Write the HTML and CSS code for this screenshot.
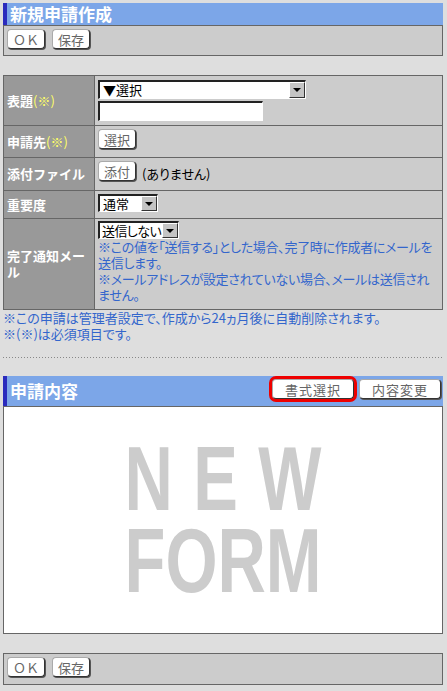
FILE: index.html
```html
<!DOCTYPE html>
<html>
<head>
    <link rel="stylesheet" href="styles.css">
</head>
<body>
    <div class="head"><span class="headTitle">新規申請作成</span></div>
    <div class="toolbar">
        <button class="btn">ＯＫ</button>
        <button class="btn">保存</button>
    </div>

    <table class="form">
        <tr class="r1">
            <th>表題<span class="req">(※)</span></th>
            <td>
                <div class="sel selTitle"><span class="selText">▼選択</span><span class="selBtn"></span></div>
                <div class="txt"></div>
            </td>
        </tr>
        <tr class="r2">
            <th>申請先<span class="req">(※)</span></th>
            <td><button class="btn">選択</button></td>
        </tr>
        <tr class="r3">
            <th>添付ファイル</th>
            <td>
                <div class="cellRow">
                    <button class="btn">添付</button>
                    <span class="none">(ありません)</span>
                </div>
            </td>
        </tr>
        <tr class="r4">
            <th>重要度</th>
            <td><div class="sel selPrio"><span class="selText">通常</span><span class="selBtn"></span></div></td>
        </tr>
        <tr class="r5">
            <th>完了通知メール</th>
            <td>
                <div class="sel selMail"><span class="selText">送信しない</span><span class="selBtn"></span></div>
                <div class="help">※この値を「送信する」とした場合、完了時に作成者にメールを<br>送信します。<br>※メールアドレスが設定されていない場合、メールは送信され<br>ません。</div>
            </td>
        </tr>
    </table>
    <div class="notes">
        ※この申請は管理者設定で、作成から24ヵ月後に自動削除されます。<br>
        ※(※)は必須項目です。
    </div>

    <div class="dots"></div>

    <div class="head headSection">
        <span class="headTitle">申請内容</span>
        <div class="headBtns">
            <button class="btn btnWide btnMark">書式選択</button>
            <button class="btn btnWide">内容変更</button>
        </div>
    </div>
    <div class="content">
        <div class="newForm">
            <div class="nfLine"><span>N</span><span>E</span><span>W</span></div>
            <div class="nfLine"><span>F</span><span>O</span><span>R</span><span>M</span></div>
        </div>
    </div>

    <div class="toolbar toolbarBottom">
        <button class="btn">ＯＫ</button>
        <button class="btn">保存</button>
    </div>
</body>
</html>
```
FILE: styles.css
```css
body {
    margin: 3px 4px 0 3px;
    background: #dedede;
    font-family: "Noto Sans CJK JP", "Noto Sans CJK SC", sans-serif;
    font-size: 13px;
    line-height: 16px;
    font-feature-settings: "palt";
}

/* blue title bars */
.head {
    display: flex;
    align-items: center;
    height: 22px;
    padding-left: 3px;
    background: #7ca6e8;
    border-left: 4px solid #2b2bbd;
    color: #fff;
}
.headTitle {
    font-size: 17px;
    font-weight: bold;
    line-height: 20px;
}
.headSection {
    height: 30px;
    margin-top: 18px;
    justify-content: space-between;
    padding-right: 2px;
}
.headBtns {
    display: flex;
    gap: 5px;
    align-self: flex-start;
    margin-top: 3px;
}

/* gray button bars */
.toolbar {
    display: flex;
    gap: 7px;
    padding: 3px 3px 6px;
    background: #cccccc;
    border: 1px solid #666;
}
.toolbarBottom {
    margin-top: 19px;
    padding-bottom: 7px;
}

.btn {
    width: 38px;
    height: 20px;
    padding: 0;
    background: #fff;
    border: 1px solid;
    border-color: #aaa #333 #333 #aaa;
    border-radius: 4px;
    box-shadow: 1px 1px 0 #555;
    color: #666;
    font-family: inherit;
    font-size: 13px;
    line-height: 17px;
    font-feature-settings: normal;
}
.btnWide {
    width: 82px;
    letter-spacing: 1px;
}
.btnMark {
    outline: 3px solid #ee0000;
}

/* form table */
.form {
    width: 100%;
    margin-top: 19px;
    table-layout: fixed;
    border-collapse: collapse;
    border: 1px solid #666;
}
.form th {
    width: 84px;
    padding: 0 3px;
    background: #999999;
    border: 1px solid #666;
    color: #fff;
    font-size: 13px;
    font-weight: bold;
    line-height: 16px;
    text-align: left;
    font-feature-settings: normal;
}
.form td {
    padding: 3px;
    background: #cccccc;
    border: 1px solid #666;
    vertical-align: top;
}
.r1 td { padding-top: 4px; padding-bottom: 4px; }
.r2 td { height: 25px; }
.r3 td { height: 26px; }
.r4 td { height: 21px; }
.r5 td { padding-top: 2px; padding-bottom: 6px; }

.req {
    color: #ffff66;
    font-weight: normal;
}

.sel {
    display: flex;
    box-sizing: border-box;
    height: 18px;
    background: #fff;
    border-style: solid;
    border-width: 2px 1px 1px 2px;
    border-color: #222 #fff #fff #222;
}
.selTitle { width: 208px; height: 19px; }
.selPrio { width: 60px; }
.selMail { width: 81px; }
.selMail .selText {
    padding-left: 2px;
    letter-spacing: -0.6px;
}
.selText {
    flex: 1;
    padding-left: 3px;
    color: #000;
    font-size: 13px;
    line-height: 15px;
    white-space: nowrap;
}
.selBtn {
    display: flex;
    align-items: center;
    justify-content: center;
    flex-shrink: 0;
    width: 14px;
    background: #c4c4c4;
    border: 1px solid;
    border-color: #fff #333 #333 #fff;
}
.selBtn::after {
    content: "";
    border-left: 4px solid transparent;
    border-right: 4px solid transparent;
    border-top: 4px solid #000;
}

.txt {
    box-sizing: border-box;
    width: 165px;
    height: 20px;
    margin-top: 2px;
    background: #fff;
    border-style: solid;
    border-width: 2px 1px 1px 2px;
    border-color: #222 #fff #fff #222;
}

.cellRow {
    display: flex;
    align-items: flex-end;
    gap: 6px;
}
.none {
    line-height: 15px;
}

.help {
    color: #3366cc;
    white-space: nowrap;
    letter-spacing: -0.3px;
}
.notes {
    color: #3366cc;
}

.dots {
    height: 1px;
    margin-top: 15px;
    background: repeating-linear-gradient(to right, #888 0 1px, transparent 1px 3px);
}

/* white form preview */
.content {
    display: flex;
    align-items: center;
    justify-content: center;
    height: 226px;
    background: #fff;
    border: 1px solid #666;
}
.newForm {
    color: #cccccc;
    font-family: "Liberation Sans", Arial, sans-serif;
    font-size: 91px;
    font-weight: bold;
    line-height: 82px;
}
.nfLine {
    display: flex;
    justify-content: space-between;
    width: 268px;
    transform: scaleX(0.735);
}
```
